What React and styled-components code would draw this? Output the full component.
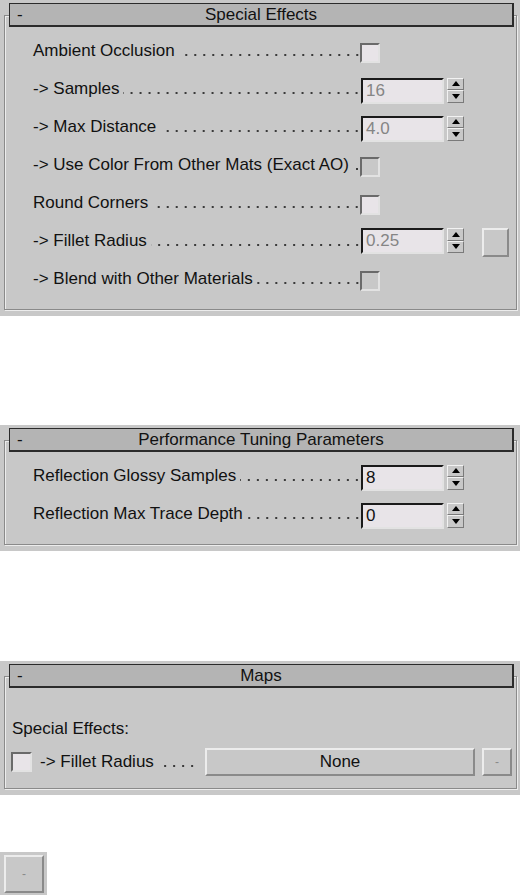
import React from 'react';
import styled, {createGlobalStyle} from 'styled-components';

const GlobalStyle = createGlobalStyle`
  html, body {
    margin: 0;
    padding: 0;
    background: #fff;
  }
  body {
    font-family: "Liberation Sans", Arial, sans-serif;
    font-size: 17px;
    color: #111;
  }
`;

const Page = styled.div`
  width: 524px;
  height: 895px;
  overflow: hidden;
  display: flex;
  flex-direction: column;
`;

const Rollout = styled.section`
  width: 520px;
  box-sizing: border-box;
  background: #c8c8c8;
  padding: 3px 0 6px;
  margin-top: ${p => p.$top || 0}px;
`;

const Header = styled.div`
  position: relative;
  z-index: 1;
  height: 24px;
  box-sizing: border-box;
  margin: 0 6px 0 9px;
  padding: 0 7px;
  background: #b4b4b4;
  border: 1px solid #2b2b2b;
  border-right-width: 2px;
  border-bottom-width: 2px;
  display: grid;
  grid-template-columns: 1fr auto 1fr;
  align-items: center;
  line-height: 20px;
`;

const Group = styled.div`
  margin: -12px 3px 0 4px;
  border: 1px solid #8a8a8a;
  box-shadow: inset 1px 1px 0 #ececec, 1px 1px 0 #ececec;
  padding: ${p => p.$padTop || 16}px 0 ${p => p.$padBottom || 11}px;
`;

const Row = styled.div`
  display: flex;
  align-items: center;
  height: 38px;
  padding-left: 28px;
`;

const Label = styled.div`
  display: flex;
  align-items: baseline;
  width: ${p => p.$width || 327}px;
  white-space: nowrap;
`;

const Leader = styled.span`
  flex: 1;
  height: 2px;
  margin: 0 ${p => p.$gap || 0}px 0 4px;
  background: linear-gradient(to right, transparent 5px, #3a3a3a 5px, #3a3a3a 7px, transparent 7px) right bottom / 9px 2px repeat-x;
`;

const Controls = styled.div`
  display: flex;
  align-items: flex-start;
  margin-top: 3px;
`;

const Check = styled.div`
  width: ${p => p.$w || 20}px;
  height: 20px;
  box-sizing: border-box;
  border: 2px solid;
  border-color: #6a6a6a #e2e2e2 #e2e2e2 #6a6a6a;
  background: ${p => (p.$off ? '#c8c8c8' : '#e8e4e8')};
`;

const Field = styled.div`
  width: 83px;
  height: 26px;
  box-sizing: border-box;
  margin-left: 1px;
  padding-left: 3px;
  border: 2px solid;
  border-color: #1a1a1a #e2e2e2 #e2e2e2 #1a1a1a;
  background: #e8e4e8;
  color: ${p => (p.$off ? '#858585' : '#111')};
  line-height: 22px;
`;

const Spinner = styled.div`
  width: 17px;
  height: 25px;
  margin-left: 3px;
  display: flex;
  flex-direction: column;
`;

const SpinButton = styled.div`
  flex: 1;
  box-sizing: border-box;
  border: 1px solid;
  border-color: #f2f2f2 #7a7a7a #7a7a7a #f2f2f2;
  background: #c8c8c8;
  display: flex;
  align-items: center;
  justify-content: center;
`;

const Arrow = styled.span`
  width: 0;
  height: 0;
  border-left: 4px solid transparent;
  border-right: 4px solid transparent;
  ${p => (p.$down ? 'border-top: 5px solid #000;' : 'border-bottom: 5px solid #000;')}
`;

const RaisedButton = styled.div`
  box-sizing: border-box;
  width: ${p => p.$w}px;
  height: ${p => p.$h}px;
  margin-left: ${p => p.$ml || 0}px;
  border: 2px solid;
  border-color: #ececec #8a8a8a #8a8a8a #ececec;
  background: #c8c8c8;
  display: flex;
  align-items: center;
  justify-content: center;
  color: ${p => (p.$dim ? '#8a8a8a' : '#111')};
  font-size: ${p => (p.$dim ? 12 : 17)}px;
`;

const SectionLabel = styled.div`
  height: 38px;
  line-height: 38px;
  padding-left: 7px;
`;

const MapRow = styled.div`
  display: flex;
  align-items: center;
  height: 28px;
  padding-left: 6px;
`;

const MapLabel = styled(Label)`
  margin-left: 8px;
`;

const Tail = styled.div`
  width: 47px;
  height: 43px;
  box-sizing: border-box;
  margin-top: 57px;
  padding: 3px 3px 2px 4px;
  background: #c8c8c8;
`;

function Spin() {
  return (
    <Spinner>
      <SpinButton><Arrow /></SpinButton>
      <SpinButton><Arrow $down /></SpinButton>
    </Spinner>
  );
}

function Title({children}) {
  return (
    <Header>
      <span>-</span>
      <span>{children}</span>
      <span />
    </Header>
  );
}

function ParamRow({label, check, off, value, extra}) {
  return (
    <Row>
      <Label>
        <span>{label}</span>
        <Leader />
      </Label>
      <Controls>
        {check ? (
          <Check $off={off} />
        ) : (
          <>
            <Field $off={off}>{value}</Field>
            <Spin />
            {extra && <RaisedButton $w={27} $h={29} $ml={18} />}
          </>
        )}
      </Controls>
    </Row>
  );
}

const effects = [
  {label: 'Ambient Occlusion', check: true},
  {label: '-> Samples', value: '16', off: true},
  {label: '-> Max Distance', value: '4.0', off: true},
  {label: '-> Use Color From Other Mats (Exact AO)', check: true, off: true},
  {label: 'Round Corners', check: true},
  {label: '-> Fillet Radius', value: '0.25', off: true, extra: true},
  {label: '-> Blend with Other Materials', check: true, off: true},
];

const tuning = [
  {label: 'Reflection Glossy Samples', value: '8'},
  {label: 'Reflection Max Trace Depth', value: '0'},
];

export default function App() {
  return (
    <Page>
      <GlobalStyle />
      <Rollout>
        <Title>Special Effects</Title>
        <Group>
          {effects.map(r => <ParamRow key={r.label} {...r} />)}
        </Group>
      </Rollout>

      <Rollout $top={109}>
        <Title>Performance Tuning Parameters</Title>
        <Group>
          {tuning.map(r => <ParamRow key={r.label} {...r} />)}
        </Group>
      </Rollout>

      <Rollout $top={110}>
        <Title>Maps</Title>
        <Group $padTop={33} $padBottom={12}>
          <SectionLabel>Special Effects:</SectionLabel>
          <MapRow>
            <Check $w={21} />
            <MapLabel $width={165}>
              <span>-&gt; Fillet Radius</span>
              <Leader $gap={10} />
            </MapLabel>
            <RaisedButton $w={270} $h={28}>None</RaisedButton>
            <RaisedButton $w={30} $h={28} $ml={7} $dim>-</RaisedButton>
          </MapRow>
        </Group>
      </Rollout>

      <Tail>
        <RaisedButton $w={40} $h={38} $dim>-</RaisedButton>
      </Tail>
    </Page>
  );
}
